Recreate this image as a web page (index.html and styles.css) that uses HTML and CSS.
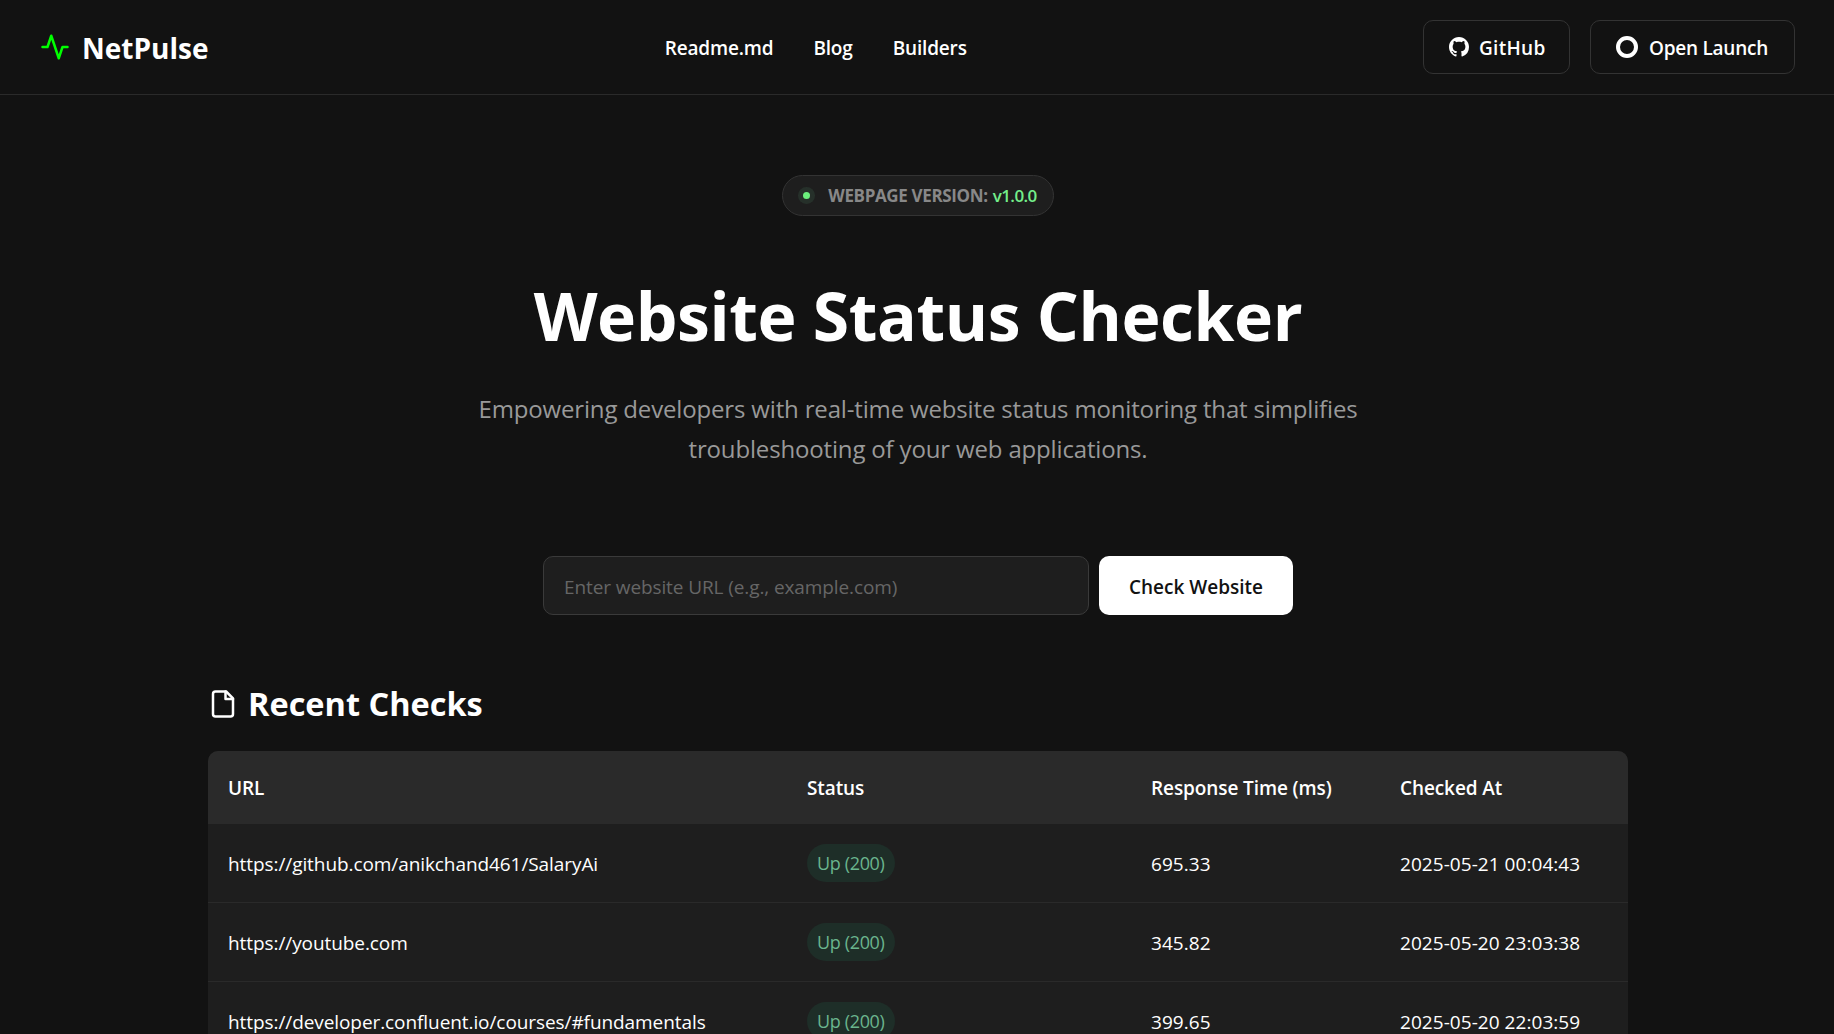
FILE: index.html
```html
<!DOCTYPE html>
<html lang="en">
<head>
<meta charset="utf-8">
<title>NetPulse - Website Status Checker</title>
<link rel="stylesheet" href="styles.css">
</head>
<body>
<div class="page">
  <header class="topbar">
    <a class="logo" href="#">
      <svg class="logo-icon" viewBox="0 0 24 24" fill="none" stroke="#00ff00" stroke-width="2" stroke-linecap="round" stroke-linejoin="round"><polyline points="2 12 6 12 9 3 15 21 18 12 22 12"/></svg>
      <span class="logo-text">NetPulse</span>
    </a>
    <nav class="nav">
      <a href="#">Readme.md</a>
      <a href="#">Blog</a>
      <a href="#">Builders</a>
    </nav>
    <div class="actions">
      <a class="btn btn-github" href="#">
        <svg class="icon-gh" viewBox="0 0 16 16" fill="#fff"><path d="M8 0C3.58 0 0 3.58 0 8c0 3.54 2.29 6.53 5.47 7.59.4.07.55-.17.55-.38 0-.19-.01-.82-.01-1.49-2.01.37-2.53-.49-2.69-.94-.09-.23-.48-.94-.82-1.13-.28-.15-.68-.52-.01-.53.63-.01 1.08.58 1.23.82.72 1.21 1.87.87 2.33.66.07-.52.28-.87.51-1.07-1.78-.2-3.64-.89-3.64-3.95 0-.87.31-1.59.82-2.15-.08-.2-.36-1.02.08-2.12 0 0 .67-.21 2.2.82.64-.18 1.32-.27 2-.27.68 0 1.36.09 2 .27 1.53-1.04 2.2-.82 2.2-.82.44 1.1.16 1.92.08 2.12.51.56.82 1.27.82 2.15 0 3.07-1.87 3.75-3.65 3.95.29.25.54.73.54 1.48 0 1.07-.01 1.93-.01 2.2 0 .21.15.46.55.38A8.013 8.013 0 0016 8c0-4.42-3.58-8-8-8z"/></svg>
        <span class="btn-label">GitHub</span>
      </a>
      <a class="btn btn-launch" href="#">
        <svg class="icon-ring" viewBox="0 0 22 22" fill="none" stroke="#fff" stroke-width="4"><circle cx="11" cy="11" r="9"/></svg>
        <span class="btn-label">Open Launch</span>
      </a>
    </div>
  </header>

  <main class="main">
    <section class="hero">
      <div class="version">
        <span class="dot"></span>
        <span class="version-label">WEBPAGE VERSION:</span>
        <span class="version-num">v1.0.0</span>
      </div>
      <h1 class="title">Website Status Checker</h1>
      <p class="subtitle">Empowering developers with real-time website status monitoring that simplifies troubleshooting of your web applications.</p>
      <form class="check-form">
        <input class="url-input" type="text" placeholder="Enter website URL (e.g., example.com)">
        <button class="check-btn" type="button">Check Website</button>
      </form>
    </section>

    <section class="recent">
      <h2 class="recent-title">
        <svg class="doc-icon" viewBox="0 0 24 24" fill="none" stroke="#fff" stroke-width="2" stroke-linecap="round" stroke-linejoin="round"><path d="M14.5 2H6a2 2 0 0 0-2 2v16a2 2 0 0 0 2 2h12a2 2 0 0 0 2-2V7.5L14.5 2z"/><polyline points="14 2 14 8 20 8"/></svg>
        <span>Recent Checks</span>
      </h2>
      <table class="checks">
        <colgroup>
          <col class="col-url"><col class="col-status"><col class="col-time"><col class="col-at">
        </colgroup>
        <thead>
          <tr><th>URL</th><th>Status</th><th>Response Time (ms)</th><th>Checked At</th></tr>
        </thead>
        <tbody>
          <tr><td class="link">https://github.com/anikchand461/SalaryAi</td><td class="status"><span class="pill">Up (200)</span></td><td class="num">695.33</td><td class="num">2025-05-21 00:04:43</td></tr>
          <tr><td class="link">https://youtube.com</td><td class="status"><span class="pill">Up (200)</span></td><td class="num">345.82</td><td class="num">2025-05-20 23:03:38</td></tr>
          <tr><td class="link">https://developer.confluent.io/courses/#fundamentals</td><td class="status"><span class="pill">Up (200)</span></td><td class="num">399.65</td><td class="num">2025-05-20 22:03:59</td></tr>
        </tbody>
      </table>
    </section>
  </main>
</div>
</body>
</html>
```
FILE: styles.css
```css
* { box-sizing: border-box; }
html, body { margin: 0; padding: 0; height: 100%; }
body {
  background: #121212;
  color: #fff;
  font-family: "Open Sans", "Noto Sans", "Liberation Sans", sans-serif;
}
a { color: inherit; text-decoration: none; }
.page { height: 100vh; overflow: hidden; }

.topbar {
  height: 95px;
  border-bottom: 1px solid #2a2a2a;
  padding: 0 39px 0 40px;
  display: flex;
  justify-content: space-between;
  align-items: center;
}
.logo { display: flex; align-items: center; gap: 12px; }
.logo-icon { width: 30px; height: 30px; }
.logo-text { padding-top: 2px; font-size: 28px; font-weight: 700; letter-spacing: 0; }
.nav { display: flex; gap: 40px; padding-top: 2px; font-size: 19px; font-weight: 600; letter-spacing: -0.17px; }
.actions { display: flex; gap: 20px; }
.btn {
  height: 54px;
  border: 1px solid #333;
  border-radius: 10px;
  display: flex;
  align-items: center;
  gap: 10px;
  font-size: 19px;
  font-weight: 600;
}
.btn-label { padding-top: 2px; }
.btn-github { width: 147px; padding-left: 25px; letter-spacing: 0.3px; }
.btn-launch { width: 205px; padding-left: 25px; gap: 11px; letter-spacing: -0.25px; }
.icon-gh { width: 20px; height: 20px; }
.icon-ring { width: 22px; height: 22px; }

.main { padding: 80px 206px 0 208px; }
.hero { display: flex; flex-direction: column; align-items: center; }
.version {
  height: 41px;
  padding: 0 16px 0 20px;
  background: #1e1e1e;
  border: 1px solid #333;
  border-radius: 21px;
  display: flex;
  align-items: center;
  font-size: 17px;
  font-weight: 700;
  letter-spacing: -0.35px;
}
.dot {
  width: 7px; height: 7px; border-radius: 50%;
  background: #6bf07c;
  box-shadow: 0 0 0 5px #26302a;
  margin-right: 18px;
}
.version-label { color: #888; margin-right: 5px; }
.version-num { color: #74ee8a; font-weight: 600; letter-spacing: -0.6px; }
.title {
  margin: 54px 0 0;
  font-size: 66px;
  line-height: 90px;
  font-weight: 700;
  letter-spacing: -0.4px;
}
.subtitle {
  margin: 29px 0 0;
  width: 900px;
  text-align: center;
  color: #999;
  font-size: 24px;
  line-height: 40px;
  letter-spacing: -0.16px;
}
.check-form { margin-top: 87px; display: flex; gap: 10px; }
.url-input {
  width: 546px;
  height: 59px;
  padding: 2px 20px 0;
  background: #1e1e1e;
  border: 1px solid #3a3a3a;
  border-radius: 10px;
  color: #fff;
  font: 400 19px "Open Sans", "Noto Sans", sans-serif;
  letter-spacing: -0.1px;
}
.url-input::placeholder { color: #666; opacity: 1; }
.check-btn {
  width: 194px;
  height: 59px;
  padding: 2px 0 0;
  background: #fff;
  color: #121212;
  border: 0;
  border-radius: 10px;
  font: 600 19px "Open Sans", "Noto Sans", sans-serif;
  letter-spacing: 0;
}

.recent { margin-top: 64px; }
.recent-title {
  margin: 0 0 22px;
  display: flex;
  align-items: center;
  gap: 10px;
  font-size: 32.5px;
  line-height: 50px;
  font-weight: 700;
}
.doc-icon { width: 30px; height: 30px; }
.checks {
  width: 1420px;
  border-collapse: separate;
  border-spacing: 0;
  table-layout: fixed;
  background: #1e1e1e;
  border-radius: 10px 10px 0 0;
  overflow: hidden;
  font-size: 19px;
  letter-spacing: -0.1px;
}
.col-url { width: 579px; }
.col-status { width: 344px; }
.col-time { width: 249px; }
.col-at { width: 248px; }
.checks th {
  height: 73px;
  padding: 0 20px;
  background: #2a2a2a;
  text-align: left;
  font-weight: 600;
}
.checks td {
  height: 79px;
  padding: 2px 20px 0;
  border-bottom: 1px solid #2a2a2a;
  white-space: nowrap;
}
.checks td.status { padding-top: 0; }
.checks td.link { letter-spacing: -0.08px; }
.checks td.num { letter-spacing: 0.05px; }
.pill {
  display: inline-block;
  height: 38px;
  line-height: 38px;
  padding: 0 10px;
  border-radius: 19px;
  background: #1e2e28;
  color: #6ab58e;
  font-size: 18px;
  letter-spacing: -0.35px;
}
```
